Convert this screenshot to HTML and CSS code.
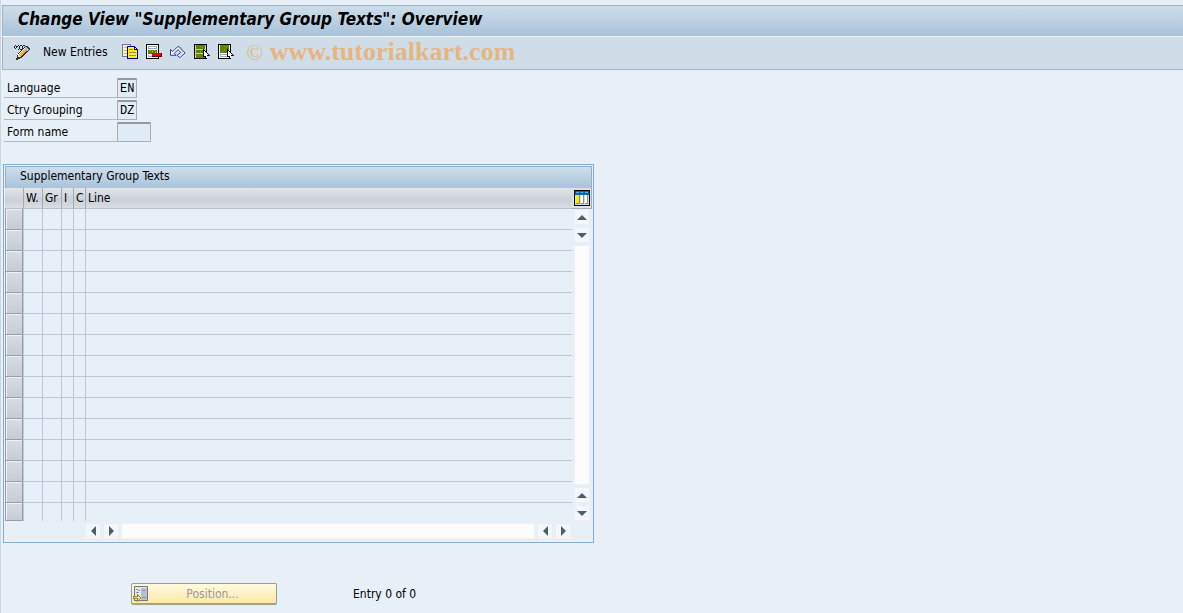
FILE: index.html
```html
<!DOCTYPE html>
<html lang="en">
<head>
    <meta charset="UTF-8">
    <meta name="viewport" content="width=device-width, initial-scale=1.0">
    <title>Change View "Supplementary Group Texts": Overview</title>
    <link rel="stylesheet" href="styles.css">
</head>
<body>
    <div class="window">
        <header class="titlebar">
            <h1>Change View "Supplementary Group Texts": Overview</h1>
        </header>
        <div class="toolbar">
            <button type="button" class="tool pencil" aria-label="Display/Change">
                <svg width="18" height="16" viewBox="0 0 18 16" shape-rendering="crispEdges">
                    <path d="M1 2h1v2H1zM2 1h1v1H2zM3 2h1v2H3zM2 4h1v1H2zM4 2h1v1H4zM5 1h1v1H5zM6 2h1v3H6zM7 5h2v1H7zM7 1h2v1H7zM9 2h1v3H9zM10 1h2v1h-2zM5 5h1v1H5z" fill="#222"/>
                    <path d="M12 2h3v1h1v1h1v2h-1v1h-1v1h-1v1h-1v1h-1v1h-1v1h-1v1H9v1H7v1H5v1H3v-2h1v-3h1V9h1V8h1V7h1V6h1V5h1V4h1V3h1z" fill="#3a3030"/>
                    <path d="M11 4h1v1h1v1h1v1h-1v1h-1v1h-1v1h-1v1H9v1H8v1H7v-1H6v-1H5v-1h1V9h1V8h1V7h1V6h1V5h1z" fill="#f99b38"/>
                    <path d="M11 4h1v1h-1v1h-1v1H9v1H8v1H7v1H6v1H5v-1h1V9h1V8h1V7h1V6h1V5h1z" fill="#fff"/>
                    <path d="M12 5h1v1h-1v1h-1v1h-1v1H9v1H8v1H7v1H6v-1h1v-1h1V9h1V8h1V7h1V6h1z" fill="#ffd23c"/>
                    <path d="M12 3h2v1h1v1h1v1h-1v1h-1V6h-1V5h-1z" fill="#aab8ee"/>
                    <path d="M5 11h1v1h1v1H5z" fill="#ffe9c0"/>
                </svg>
            </button>
            <button type="button" class="tool text">New Entries</button>
            <button type="button" class="tool" aria-label="Copy As">
                <svg width="16" height="16" viewBox="0 0 16 16" shape-rendering="crispEdges">
                    <path d="M0 0h9v13H0z" fill="#6f7596"/>
                    <path d="M1 1h7v11H1z" fill="#fff6a0"/>
                    <path d="M2 3h3v1H2zM2 6h3v1H2zM2 9h3v1H2z" fill="#c9bf55"/>
                    <path d="M5 2h8v1h1v1h1v1h1v10H5z" fill="#00008c"/>
                    <path d="M6 3h6v3h3v8H6z" fill="#ffee22"/>
                    <path d="M13 4h1v1h-1z" fill="#fff"/>
                    <path d="M7 5h4v1H7zM7 8h7v1H7zM7 11h7v1H7z" fill="#9c9430"/>
                </svg>
            </button>
            <button type="button" class="tool" aria-label="Delete">
                <svg width="16" height="16" viewBox="0 0 16 16" shape-rendering="crispEdges">
                    <path d="M0 0h13v15H0z" fill="#000"/>
                    <path d="M1 1h11v13H1z" fill="#fff"/>
                    <path d="M2 2h9v3H2zM2 11h9v2H2z" fill="#9cabbb"/>
                    <path d="M3 3h7v1H3zM3 11h7v1H3z" fill="#fff"/>
                    <path d="M2 6h9v4H2z" fill="#5b8500"/>
                    <path d="M4 6h1v1H4zM6 7h1v1H6zM8 6h1v1H8zM9 8h1v1H9z" fill="#a9cb55"/>
                    <path d="M6 9h10v4H6z" fill="#5a0000"/>
                    <path d="M6 9h9v3H6z" fill="#f00000"/>
                </svg>
            </button>
            <button type="button" class="tool" aria-label="Undo Change">
                <svg width="16" height="16" viewBox="0 0 17 16">
                    <path d="M.5 5.500v6h6l-2-2 4-4 3 3-4 3 3 2.500 5.500-5-6-6.500h-2l-5 5z" fill="#f4f8fc" stroke="#2a2a96"/>
                    <path d="M9 3l5 5-4 4" fill="none" stroke="#aab6dc"/>
                </svg>
            </button>
            <button type="button" class="tool" aria-label="Select All">
                <svg width="16" height="16" viewBox="0 0 16 16" shape-rendering="crispEdges">
                    <path d="M0 0h13v15H0z" fill="#000"/>
                    <path d="M1 1h11v13H1z" fill="#c3d39a"/>
                    <path d="M2 1h9v4H2zM2 6h9v3H2zM2 10h9v4H2z" fill="#5b8500"/>
                    <path d="M6 2h1v1H6zM8 3h1v1H8zM6 7h1v1H6zM4 11h1v1H4z" fill="#86a83a"/>
                    <path d="M9 5h1v1h1v1h1v1h1v1h1v1h1v1h1v1h-3v3h-2v-2h-2z" fill="#000"/>
                    <path d="M10 7h1v1h1v1h1v1h1v1h-1v3h-1v-2h-2z" fill="#fff"/>
                </svg>
            </button>
            <button type="button" class="tool" aria-label="Select Block">
                <svg width="16" height="16" viewBox="0 0 16 16" shape-rendering="crispEdges">
                    <path d="M0 0h13v15H0z" fill="#000"/>
                    <path d="M1 1h11v13H1z" fill="#fff"/>
                    <path d="M2 1h9v8H2z" fill="#5b8500"/>
                    <path d="M6 2h1v1H6zM8 3h1v1H8zM6 5h1v1H6zM4 7h1v1H4z" fill="#86a83a"/>
                    <path d="M2 10h9v3H2z" fill="#9cabbb"/>
                    <path d="M3 11h6v1H3z" fill="#fff"/>
                    <path d="M9 5h1v1h1v1h1v1h1v1h1v1h1v1h1v1h-3v3h-2v-2h-2z" fill="#000"/>
                    <path d="M10 7h1v1h1v1h1v1h1v1h-1v3h-1v-2h-2z" fill="#fff"/>
                </svg>
            </button>
            <span class="watermark"><span class="copy">©</span> www.tutorialkart.com</span>
        </div>

        <main>
            <form class="fields">
                <div class="field">
                    <label for="language">Language</label>
                    <input id="language" class="short" type="text" value="EN" readonly>
                </div>
                <div class="field">
                    <label for="grouping">Ctry Grouping</label>
                    <input id="grouping" class="short" type="text" value="DZ" readonly>
                </div>
                <div class="field">
                    <label for="formName">Form name</label>
                    <input id="formName" type="text">
                </div>
            </form>

            <section class="panel">
                <h2>Supplementary Group Texts</h2>
                <div class="grid">
                    <table>
                        <thead>
                            <tr>
                                <th class="sel"></th>
                                <th class="wage">W.</th>
                                <th class="group">Gr</th>
                                <th class="flag">I</th>
                                <th class="flag">C</th>
                                <th>Line</th>
                            </tr>
                        </thead>
                        <tbody id="rows"></tbody>
                    </table>
                    <div class="side">
                        <button type="button" class="config" aria-label="Configuration">
                            <svg width="16" height="16" viewBox="0 0 16 16" shape-rendering="crispEdges">
                                <path d="M0 0h16v16H0z" fill="#000"/>
                                <path d="M1 1h14v14H1z" fill="#d4dce4"/>
                                <path d="M1 1h14v4H1z" fill="#0b64ad"/>
                                <path d="M2 2h3v1H2zM7 2h2v1H7zM11 2h3v1h-3z" fill="#55b0ee"/>
                                <path d="M2 5h4v8H2z" fill="#ffe800"/>
                                <path d="M7 5h2v8H7zM11 5h2v8h-2z" fill="#fff"/>
                                <path d="M5 5h1v9H2v-1h3zM9 5h1v9H7v-1h2zM13 5h1v9h-3v-1h2z" fill="#8a8f80"/>
                            </svg>
                        </button>
                        <div class="vscroll">
                            <button type="button" class="arrow up" aria-label="Scroll up"></button>
                            <button type="button" class="arrow down" aria-label="Next row"></button>
                            <div class="track"></div>
                            <button type="button" class="arrow up" aria-label="Previous row"></button>
                            <button type="button" class="arrow down" aria-label="Scroll down"></button>
                        </div>
                    </div>
                </div>
                <div class="hscroll">
                    <button type="button" class="arrow left" aria-label="Scroll left"></button>
                    <button type="button" class="arrow right" aria-label="Next column"></button>
                    <div class="track"></div>
                    <button type="button" class="arrow left" aria-label="Previous column"></button>
                    <button type="button" class="arrow right" aria-label="Scroll right"></button>
                </div>
            </section>

            <div class="footer">
                <button type="button" class="position" disabled>
                    <svg width="16" height="16" viewBox="0 0 16 16" shape-rendering="crispEdges">
                        <path d="M1 0h14v15H1z" fill="#73777f"/>
                        <path d="M2 1h12v13H2z" fill="#e4e7ec"/>
                        <path d="M8 2h6v12H8z" fill="#b9bdd3"/>
                        <path d="M3 3h2v1H3zM5 4h2v1H5zM3 6h3v1H3zM9 4h3v1H9zM9 11h4v1H9z" fill="#8d9199"/>
                        <path d="M0 10h4V8l4 4-4 4v-3H0z" fill="#8f8445"/>
                        <path d="M1 11h4v-1l2 2-2 2v-2H1z" fill="#ffe45c"/>
                    </svg>
                    <span>Position...</span>
                </button>
                <span>Entry 0 of 0</span>
            </div>
        </main>
    </div>
    <script>
        // Fill the empty table rows
        const rows = document.getElementById("rows");
        for (let i = 1; i <= 15; i++) {
            const tr = document.createElement("tr");
            tr.innerHTML = '<td class="sel"><button type="button" aria-label="Select row ' + i + '"></button></td>' +
                "<td></td><td></td><td></td><td></td><td></td>";
            rows.appendChild(tr);
        }
    </script>
</body>
</html>
```

FILE: styles.css
```css
* {
    box-sizing: border-box;
}
body {
    margin: 0;
    background: #e8f0f7;
    color: #000;
    font-family: "DejaVu Sans Condensed", "DejaVu Sans", sans-serif;
    font-size: 12px;
}
button {
    padding: 0;
    border: none;
    background: none;
    color: inherit;
    font: inherit;
}
svg {
    display: block;
}

/* Title and toolbar */
.window {
    min-height: 100vh;
    padding-top: 5px;
    border-left: 1px solid #cbd6e0;
}
.titlebar {
    height: 31px;
    margin-left: 1px;
    padding-left: 15px;
    border-top: 1px solid #a3b0c0;
    border-left: 1px solid #a3b4c6;
    background: linear-gradient(#cddeea, #a8c2da);
}
h1 {
    margin: 0;
    font-size: 17px;
    line-height: 27px;
    font-style: italic;
    white-space: nowrap;
}
.toolbar {
    display: flex;
    align-items: center;
    gap: 8px;
    height: 34px;
    margin-left: 1px;
    padding: 0 0 2px 10px;
    border-top: 1px solid #f2f7fb;
    border-left: 1px solid #a3b4c6;
    border-bottom: 1px solid #a3b6c8;
    background: #cfdde8;
}
.tool.text {
    margin: 0 6px 0 4px;
    white-space: nowrap;
}
.watermark {
    margin-left: 5px;
    color: #e6b580;
    font: bold 26px "Liberation Serif", serif;
    white-space: nowrap;
}
.copy {
    font-size: 22px;
    font-weight: normal;
}

/* Selection fields */
main {
    padding: 6px 2px;
}
.fields {
    padding-left: 1px;
}
.field {
    display: flex;
    align-items: flex-end;
    height: 22px;
}
.field label {
    width: 113px;
    padding-left: 3px;
    border-bottom: 1px solid #b4b9be;
    line-height: 18px;
}
.field input {
    width: 34px;
    height: 20px;
    padding: 0 2px;
    border: 1px solid #a9adb1;
    border-top: 2px solid #95999d;
    border-radius: 1px;
    background: #dfecf5;
    font: 12px "Liberation Mono", monospace;
}
.field input.short {
    width: 20px;
}

/* Table */
.panel {
    width: calc(50% + 2px);
    margin-top: 22px;
    padding: 1px;
    border: 1px solid #8aaccb;
}
h2 {
    height: 22px;
    margin: 0;
    padding-left: 14px;
    border: 1px solid #93aec8;
    border-bottom: none;
    background: linear-gradient(#cddfeb, #a9c3db);
    font-size: 12px;
    font-weight: normal;
    line-height: 19px;
}
.grid {
    display: flex;
}
table {
    flex: 1;
    table-layout: fixed;
    border-collapse: separate;
    border-spacing: 0;
}
th {
    height: 21px;
    padding: 0 0 0 2px;
    border-left: 1px solid #a3abb5;
    border-bottom: 1px solid #b5bfcd;
    background: linear-gradient(#e2e4e6, #cbd1d9 60%, #dadde1);
    font-weight: normal;
    text-align: left;
    white-space: nowrap;
}
td {
    height: 21px;
    padding: 0;
    border-left: 1px solid #bdc7d7;
    border-bottom: 1px solid #bdc7d7;
}
.sel {
    width: 18px;
    border-left: none;
}
td.sel {
    border-bottom: none;
}
.sel button {
    display: block;
    width: 18px;
    height: 21px;
    border: 1px solid #969fac;
    border-top-width: 0;
    box-shadow: inset 1px 1px #eef1f4;
    background: linear-gradient(#d9dce1, #c6ccd5);
}
tbody tr:last-child td {
    height: 18px;
    border-bottom: none;
}
tbody tr:last-child button {
    height: 18px;
}
.wage,
.group {
    width: 19px;
}
.flag {
    width: 12px;
}
.side {
    display: flex;
    flex-direction: column;
    width: 20px;
}
.config {
    height: 21px;
    padding: 1px 2px;
    border-right: 1px solid #a3abb5;
    border-bottom: 1px solid #a3abb5;
    background: #dde1e5;
}
.vscroll,
.hscroll {
    display: flex;
    gap: 2px;
}
.vscroll {
    flex: 1;
    flex-direction: column;
    padding: 0 2px;
}
.hscroll {
    height: 20px;
    padding: 2px 21px 2px 80px;
}
.track {
    flex: 1;
    border: 1px solid #edf1f5;
    background: #fcfcfc;
}
.arrow {
    display: flex;
    align-items: center;
    justify-content: center;
    flex: none;
    width: 16px;
    height: 16px;
    border: 1px solid #ebeff4;
    background: #f3f6fa;
}
.arrow::before {
    content: "";
    border: 5px solid transparent;
}
.up::before {
    border-top: none;
    border-bottom-color: #4c5d6b;
}
.down::before {
    border-bottom: none;
    border-top-color: #4c5d6b;
}
.left::before {
    border-left: none;
    border-right-color: #4c5d6b;
}
.right::before {
    border-right: none;
    border-left-color: #4c5d6b;
}

/* Footer */
.footer {
    display: flex;
    align-items: center;
    gap: 76px;
    margin: 40px 0 0 128px;
}
.position {
    display: flex;
    align-items: center;
    width: 146px;
    height: 22px;
    padding-left: 1px;
    border: 1px solid #989a9b;
    border-bottom: 2px solid #a8a088;
    border-radius: 2px;
    background: linear-gradient(#fffbe0, #fdf0bd 60%, #fbe9a4);
    color: #999;
}
.position span {
    flex: 1;
    text-align: center;
}
```
